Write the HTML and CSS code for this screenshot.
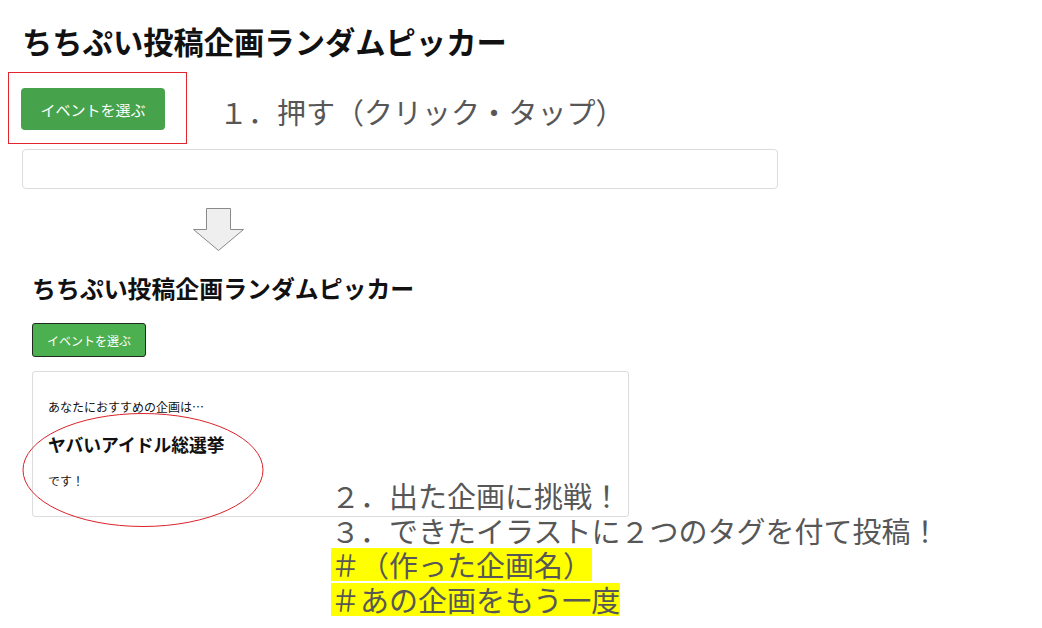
FILE: index.html
```html
<!DOCTYPE html>
<html>
  <head>
    <title>ちちぷい投稿企画ランダムピッカー 使い方</title>
    <link rel="stylesheet" href="styles.css">
  </head>

  <body>
    <div class="page">
      <h1 class="title">ちちぷい投稿企画ランダムピッカー</h1>

      <div class="step">
        <div class="frame">
          <button class="pick-button">イベントを選ぶ</button>
        </div>
        <div class="note">１．押す（クリック・タップ）</div>
      </div>

      <div class="result-field"></div>

      <svg class="arrow" width="52" height="44" viewBox="0 0 52 44">
        <polygon
          points="13.5,0.5 37.5,0.5 37.5,21.5 50.5,21.5 25.5,42.5 0.5,21.5 13.5,21.5"
          fill="#efefef"
          stroke="#8a8a8a"
        />
      </svg>

      <div class="shot">
        <h2 class="shot-title">ちちぷい投稿企画ランダムピッカー</h2>
        <button class="shot-button">イベントを選ぶ</button>
        <div class="shot-result">
          <p class="lead">あなたにおすすめの企画は…</p>
          <h3 class="event-name">ヤバいアイドル総選挙</h3>
          <p class="tail">です！</p>
        </div>
      </div>

      <!-- red circle drawn over the result -->
      <svg class="circle" width="244" height="116" viewBox="0 0 244 116">
        <ellipse cx="121" cy="58" rx="120" ry="56.5" fill="none" stroke="#d9232a" />
      </svg>

      <div class="steps-after">
        <div class="line">２．出た企画に挑戦！</div>
        <div class="line">３．できたイラストに２つのタグを付て投稿！</div>
        <div class="mark">＃（作った企画名）</div>
        <div class="mark">＃あの企画をもう一度</div>
      </div>
    </div>
  </body>
</html>
```

FILE: styles.css
```css
body {
  font-family: "Noto Sans CJK JP", "Noto Sans", sans-serif;
  margin: 0;
  background: #fff;
  color: #111;
}

.page {
  position: relative;
  padding: 26px 0 0 22px;
  height: 602px;
}

.title {
  margin: 0;
  font-size: 30.3px;
  line-height: 30px;
  font-weight: bold;
}

.step {
  display: flex;
  align-items: flex-start;
  margin-top: 16px;
}

.frame {
  border: 1px solid #e0262c;
  padding: 15px 21px 13px 12px;
  margin-left: -14px;
}

.pick-button {
  display: block;
  width: 144px;
  height: 42px;
  padding: 0;
  background-color: #47a34b;
  color: white;
  border: none;
  border-radius: 4px;
  font-family: inherit;
  font-size: 15px;
}

.note {
  margin: 25px 0 0 32px;
  font-size: 29px;
  line-height: 29px;
  color: #575757;
}

.result-field {
  box-sizing: border-box;
  width: 756px;
  height: 40px;
  margin-top: 5px;
  border: 1px solid #dcdcdc;
  border-radius: 4px;
}

.arrow {
  display: block;
  margin: 19px 0 0 171px;
}

.shot {
  margin-left: 10px;
}

.shot-title {
  margin: 24px 0 0;
  font-size: 23.9px;
  line-height: 24px;
  font-weight: bold;
}

.shot-button {
  display: block;
  width: 114px;
  height: 34px;
  margin-top: 23px;
  padding: 0;
  background-color: #4caf50;
  color: white;
  border: 1px solid #1f2a1f;
  border-radius: 3px;
  font-family: inherit;
  font-size: 12px;
}

.shot-result {
  box-sizing: border-box;
  width: 597px;
  height: 146px;
  margin-top: 14px;
  padding: 29px 15px 0;
  border: 1px solid #dcdcdc;
  border-radius: 3px;
}

.lead,
.tail {
  margin: 0;
  font-size: 12px;
  line-height: 12px;
}

.event-name {
  margin: 22px 0 0;
  font-size: 17.8px;
  line-height: 18px;
  font-weight: bold;
}

.tail {
  margin-top: 22px;
}

.circle {
  position: absolute;
  left: 22px;
  top: 412px;
}

.steps-after {
  position: absolute;
  left: 331px;
  top: 478px;
  font-size: 29px;
  color: #575757;
}

.line {
  line-height: 35px;
}

.mark {
  width: fit-content;
  line-height: 33px;
  margin-bottom: 2px;
  background: #ffff00;
}
```
